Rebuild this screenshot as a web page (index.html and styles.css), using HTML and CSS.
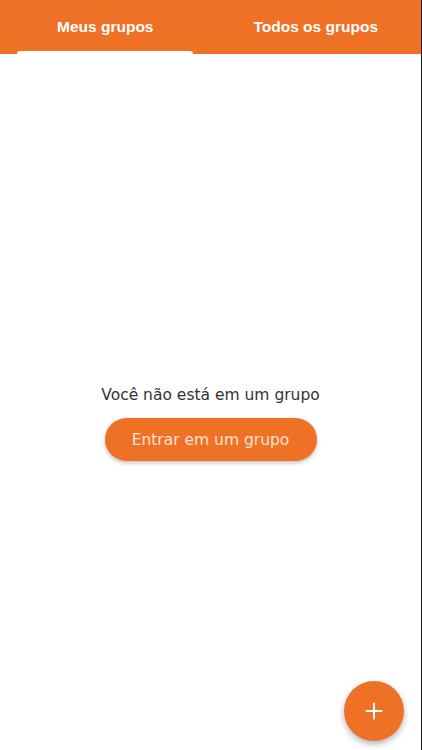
FILE: index.html
```html
<!DOCTYPE html>
<html lang="pt">
<head>
<meta charset="utf-8">
<title>Grupos</title>
<link rel="stylesheet" href="styles.css">
</head>
<body>
<div class="screen">
  <header class="tabs">
    <div class="tab active">Meus grupos<span class="indicator"></span></div>
    <div class="tab">Todos os grupos</div>
  </header>
  <main class="content">
    <p class="empty-text">Você não está em um grupo</p>
    <button class="join-btn">Entrar em um grupo</button>
  </main>
  <button class="fab" aria-label="Adicionar">
    <svg width="18" height="18" viewBox="0 0 18 18"><path d="M9 1.5v15M1.5 9h15" stroke="#fff" stroke-width="2" stroke-linecap="round"/></svg>
  </button>
</div>
</body>
</html>
```
FILE: styles.css
```css
* { box-sizing: border-box; }
html, body { margin: 0; padding: 0; background: #fff; }
body { width: 422px; height: 750px; overflow: hidden; }
.screen {
  position: relative;
  width: 422px;
  height: 750px;
  display: flex;
  flex-direction: column;
  border-right: 1px solid #1a1a1a;
  background: #fff;
}
.tabs {
  height: 54px;
  background: #ee7125;
  display: flex;
}
.tab {
  position: relative;
  flex: 1;
  display: flex;
  align-items: center;
  justify-content: center;
  color: #fff;
  font-family: "Liberation Sans", Arial, sans-serif;
  font-weight: bold;
  font-size: 15.5px;
  line-height: 1;
}
.indicator {
  position: absolute;
  left: 17px;
  right: 18px;
  bottom: 0;
  height: 3px;
  background: #fff;
  border-radius: 3px 3px 0 0;
}
.content {
  flex: 1;
  display: flex;
  flex-direction: column;
  align-items: center;
  padding-top: 330px;
}
.empty-text {
  margin: 0;
  font-family: "DejaVu Sans", sans-serif;
  font-size: 15.5px;
  color: #333;
  line-height: 22px;
}
.join-btn {
  margin-top: 12px;
  width: 212px;
  height: 43px;
  border: none;
  border-radius: 22px;
  background: #ee7125;
  color: #fde3d0;
  font-family: "DejaVu Sans", sans-serif;
  font-size: 15.5px;
  box-shadow: 0 2px 4px rgba(0,0,0,0.25);
}
.fab {
  position: absolute;
  left: 344px;
  top: 681px;
  width: 60px;
  height: 60px;
  border: none;
  border-radius: 50%;
  background: #ee7125;
  display: flex;
  align-items: center;
  justify-content: center;
  box-shadow: 0 3px 6px rgba(0,0,0,0.3);
}
```
